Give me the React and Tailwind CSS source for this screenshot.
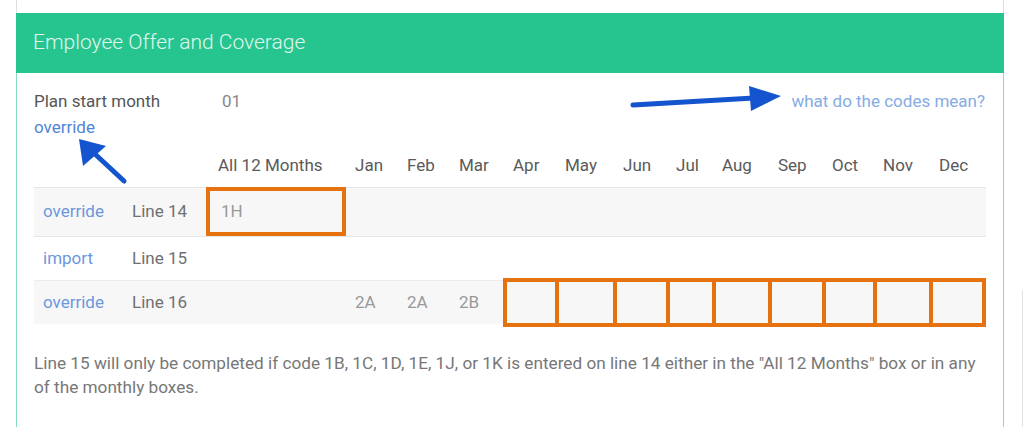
const months = ["Jan", "Feb", "Mar", "Apr", "May", "Jun", "Jul", "Aug", "Sep", "Oct", "Nov", "Dec"];
const monthPad = ["pl-[9px]", "pl-[10px]", "pl-[10px]", "pl-[10px]", "pl-[10px]", "pl-[10px]", "pl-[10px]", "pl-[10px]", "pl-[10px]", "pl-[10px]", "pl-[10px]", "pl-[10px]"];
const cols = "grid grid-cols-[88px_86px_138px_51px_52px_54px_52px_58px_53px_46px_56px_54px_51px_56px_57px]";

const Arrows = () => (
  <svg className="absolute inset-0 pointer-events-none" width="1024" height="427" viewBox="0 0 1024 427">
    <line x1="633" y1="105" x2="754" y2="98" stroke="#1455cf" strokeWidth="5" strokeLinecap="round" />
    <polygon points="749,86 781,96 751,111" fill="#1455cf" />
    <line x1="96" y1="155" x2="124" y2="181" stroke="#1455cf" strokeWidth="5" strokeLinecap="round" />
    <polygon points="79,139 83,166 106,146" fill="#1455cf" />
  </svg>
);

const App = () => {
  return (
    <div className="relative w-[1024px] h-[427px] overflow-hidden bg-white font-['Roboto',sans-serif]">
      <div className="flex h-full">
        <div className="ml-[16px] w-[988px] flex flex-col">
          <div className="h-[13px] border-x border-[#dedede]" />
          <div className="h-[60px] bg-[#26c48e] flex items-center pl-[17px]">
            <span className="text-[21px] font-light text-white/85">Employee Offer and Coverage</span>
          </div>
          <div className="flex-1 border-x border-[#86dcbb] px-[17px] pt-[17px]">
            <div className="flex justify-between">
              <div className="flex flex-col">
                <div className="flex leading-[22px] text-[17px]">
                  <span className="w-[188px] text-[#555]">Plan start month</span>
                  <span className="text-[#888]">01</span>
                </div>
                <span className="mt-[4px] leading-[22px] text-[17px] text-[#4f86d8]">override</span>
              </div>
              <span className="leading-[22px] text-[17px] text-[#86abe4] pr-px">what do the codes mean?</span>
            </div>

            <div className={`${cols} h-[49px] pt-[16px] leading-[22px] text-[17px] text-[#5a5a5a]`}>
              <span />
              <span />
              <span className="pl-[10px]">All 12 Months</span>
              {months.map((m, i) => (
                <span key={m} className={monthPad[i]}>{m}</span>
              ))}
            </div>

            <div className={`${cols} h-[49px] items-center bg-[#f7f7f7] border-t border-[#e6e6e6] text-[17px]`}>
              <span className="pl-[9px] text-[#6b97de]">override</span>
              <span className="pl-[10px] text-[#707070]">Line 14</span>
              <div className="self-stretch -mt-px -ml-[2px] border-4 border-[#e6720f] flex items-center pl-[11px] text-[#999]">1H</div>
            </div>

            <div className={`${cols} h-[44px] items-center border-t border-[#e6e6e6] text-[17px]`}>
              <span className="pl-[9px] text-[#6b97de]">import</span>
              <span className="pl-[10px] text-[#707070]">Line 15</span>
            </div>

            <div className={`${cols} h-[44px] items-center bg-[#f7f7f7] border-t border-[#ececec] text-[17px]`}>
              <span className="pl-[9px] text-[#6b97de]">override</span>
              <span className="pl-[10px] text-[#707070]">Line 16</span>
              <span />
              <span className="pl-[9px] text-[#999]">2A</span>
              <span className="pl-[10px] text-[#999]">2A</span>
              <span className="pl-[10px] text-[#999]">2B</span>
              {months.slice(3).map((m, i) => (
                <div
                  key={m}
                  className={`self-stretch -my-[3px] border-y-4 border-l-4 border-[#e6720f] ${i === 8 ? "border-r-4" : ""}`}
                />
              ))}
            </div>

            <p className="mt-[27px] text-[17.2px] leading-[24px] text-[#777]">
              Line 15 will only be completed if code 1B, 1C, 1D, 1E, 1J, or 1K is entered on line 14 either in the "All 12 Months" box or in any of the monthly boxes.
            </p>
          </div>
        </div>
        <div className="ml-auto mr-px mt-[290px] w-px border-l border-[#e3e3e3]" />
      </div>
      <Arrows />
    </div>
  );
};

export default App;
